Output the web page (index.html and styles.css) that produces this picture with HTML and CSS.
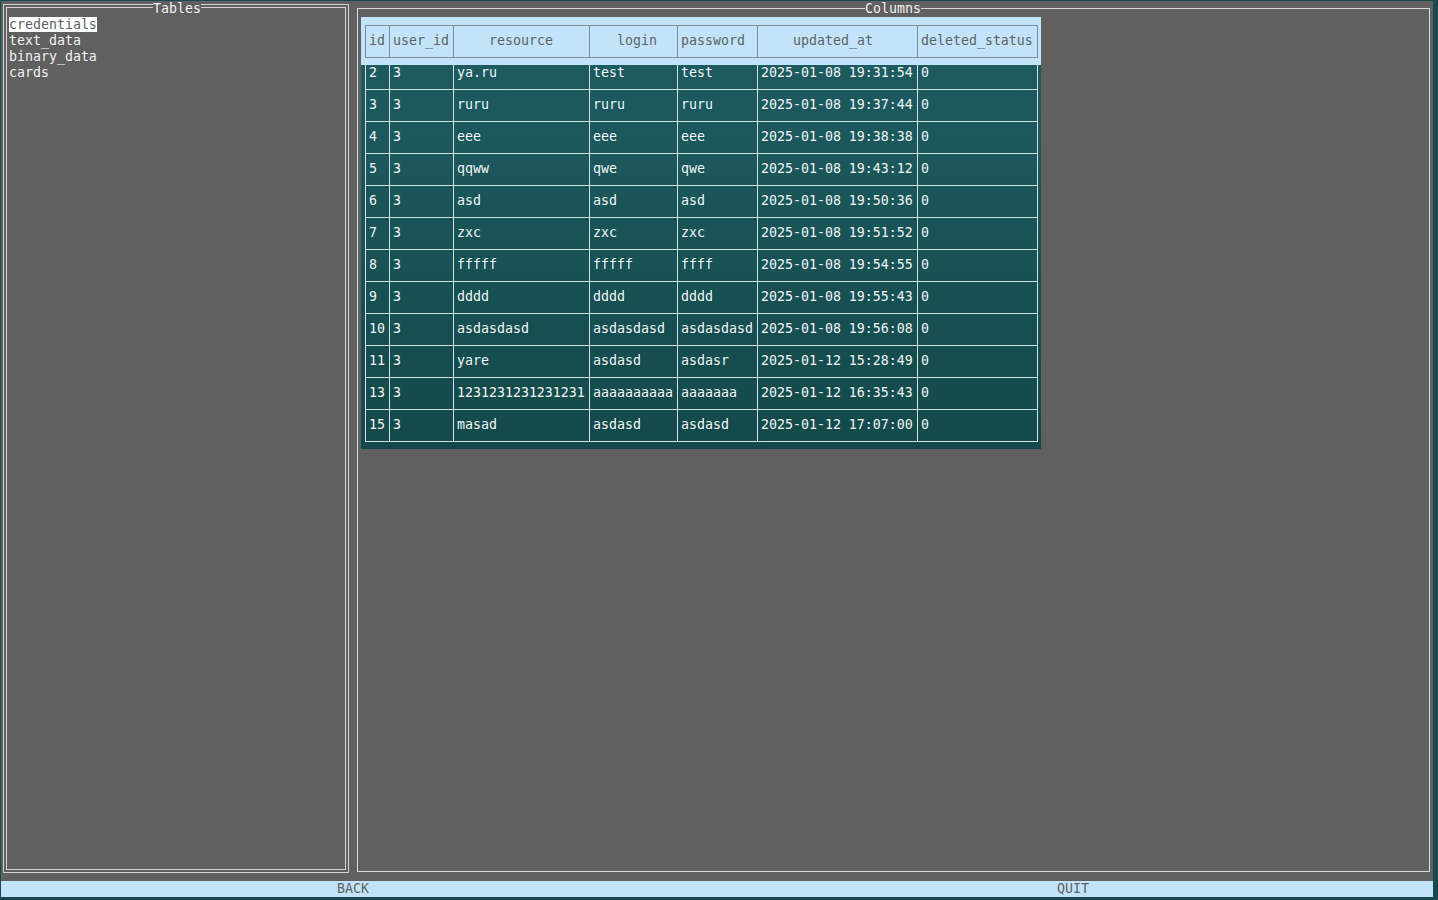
FILE: index.html
```html
<!DOCTYPE html>
<html>
<head>
<meta charset="utf-8">
<title>Tables</title>
<link rel="stylesheet" href="styles.css">
</head>
<body>
<div class="term">
  <div class="main">
    <section class="panel panel-left">
      <div class="box box-double">
        <ul class="list">
          <li class="item"><span class="sel">credentials</span></li>
          <li class="item">text_data</li>
          <li class="item">binary_data</li>
          <li class="item">cards</li>
        </ul>
      </div>
      <span class="title title-tables">Tables</span>
    </section>
    <section class="panel panel-right">
      <div class="box box-single">
        <div class="table-wrap">
          <table class="grid">
            <thead>
              <tr>
                <th class="c1">id</th>
                <th class="c2">user_id</th>
                <th class="c3 i4">resource</th>
                <th class="c4 i3">login</th>
                <th class="c5">password</th>
                <th class="c6 i4">updated_at</th>
                <th class="c7">deleted_status</th>
              </tr>
            </thead>
            <tbody>
              <tr><td>2</td><td>3</td><td>ya.ru</td><td>test</td><td>test</td><td>2025-01-08 19:31:54</td><td>0</td></tr>
              <tr><td>3</td><td>3</td><td>ruru</td><td>ruru</td><td>ruru</td><td>2025-01-08 19:37:44</td><td>0</td></tr>
              <tr><td>4</td><td>3</td><td>eee</td><td>eee</td><td>eee</td><td>2025-01-08 19:38:38</td><td>0</td></tr>
              <tr><td>5</td><td>3</td><td>qqww</td><td>qwe</td><td>qwe</td><td>2025-01-08 19:43:12</td><td>0</td></tr>
              <tr><td>6</td><td>3</td><td>asd</td><td>asd</td><td>asd</td><td>2025-01-08 19:50:36</td><td>0</td></tr>
              <tr><td>7</td><td>3</td><td>zxc</td><td>zxc</td><td>zxc</td><td>2025-01-08 19:51:52</td><td>0</td></tr>
              <tr><td>8</td><td>3</td><td>fffff</td><td>fffff</td><td>ffff</td><td>2025-01-08 19:54:55</td><td>0</td></tr>
              <tr><td>9</td><td>3</td><td>dddd</td><td>dddd</td><td>dddd</td><td>2025-01-08 19:55:43</td><td>0</td></tr>
              <tr><td>10</td><td>3</td><td>asdasdasd</td><td>asdasdasd</td><td>asdasdasd</td><td>2025-01-08 19:56:08</td><td>0</td></tr>
              <tr><td>11</td><td>3</td><td>yare</td><td>asdasd</td><td>asdasr</td><td>2025-01-12 15:28:49</td><td>0</td></tr>
              <tr><td>13</td><td>3</td><td>1231231231231231</td><td>aaaaaaaaaa</td><td>aaaaaaa</td><td>2025-01-12 16:35:43</td><td>0</td></tr>
              <tr><td>15</td><td>3</td><td>masad</td><td>asdasd</td><td>asdasd</td><td>2025-01-12 17:07:00</td><td>0</td></tr>
            </tbody>
          </table>
        </div>
      </div>
      <span class="title title-columns">Columns</span>
    </section>
  </div>
  <div class="bar">
    <span class="btn">BACK</span>
    <span class="btn">QUIT</span>
  </div>
</div>
</body>
</html>
```

FILE: styles.css
```css
html, body {
  margin: 0;
  padding: 0;
}

body {
  background: #164a4c;
  width: 1438px;
  height: 900px;
  overflow: hidden;
}

.term {
  margin: 1px 0 0 1px;
  width: 1432px;
  height: 896px;
  background: #606060;
  font-family: "DejaVu Sans Mono", "Liberation Mono", monospace;
  font-size: 13.28px;
  line-height: 16px;
  color: #f0f0f0;
  display: flex;
  flex-direction: column;
}

.main {
  height: 880px;
  display: flex;
}

.panel {
  position: relative;
  display: flex;
  box-sizing: border-box;
}

.panel-left {
  width: 352px;
}

.panel-right {
  width: 1080px;
}

.box {
  flex: 1;
  box-sizing: border-box;
  display: flex;
  flex-direction: column;
  align-items: flex-start;
}

.box-double {
  margin: 3px 4px 8px 2px;
  border: 4px double #d2d2d2;
  padding: 9px 0 0 2px;
}

.box-single {
  margin: 7px 3px 9px 4px;
  border: 1px solid #d8d8d8;
  padding: 8px 0 0 3px;
}

.title {
  position: absolute;
  top: 0;
  height: 16px;
  background: #606060;
  color: #f2f2f2;
  white-space: pre;
}

.title-tables {
  left: 152px;
}

.title-columns {
  left: 512px;
}

.list {
  list-style: none;
  margin: 0;
  padding: 0;
}

.item {
  height: 16px;
  white-space: pre;
  color: #f2f2f2;
}

.sel {
  background: #ffffff;
  color: #606060;
}

.table-wrap {
  width: 680px;
  box-sizing: border-box;
  padding: 8px 3px 7px 4px;
  background: linear-gradient(to bottom, #c2e3f9 0, #c2e3f9 48px, #1d5b61 48px, #13494a 100%);
}

.grid {
  border-collapse: separate;
  border-spacing: 0;
  table-layout: fixed;
  width: 673px;
}

.grid th,
.grid td {
  padding: 7px 4px 8px 3px;
  line-height: 16px;
  height: 16px;
  white-space: pre;
  overflow: visible;
  text-align: left;
  font-weight: normal;
}

.grid th {
  color: #5d6367;
  border-top: 1px solid #7e8c95;
  border-bottom: 1px solid #7e8c95;
  border-left: 1px solid #7e8c95;
}

.grid th:last-child {
  border-right: 1px solid #7e8c95;
}

.grid td {
  color: #f2f6f6;
  border-left: 1px solid #d3e1e1;
  border-bottom: 1px solid #d3e1e1;
}

.grid td:last-child {
  border-right: 1px solid #d3e1e1;
}

.c1 { width: 16px; }
.c2 { width: 56px; }
.c3 { width: 128px; }
.c4 { width: 80px; }
.c5 { width: 72px; }
.c6 { width: 152px; }
.c7 { width: 112px; }

.i3 { text-indent: 24px; }
.i4 { text-indent: 32px; }

.bar {
  height: 16px;
  display: grid;
  grid-template-columns: 720px 1fr;
  background: #c2e3f9;
  color: #5d6367;
}

.btn {
  padding-left: 336px;
  white-space: pre;
}
```
